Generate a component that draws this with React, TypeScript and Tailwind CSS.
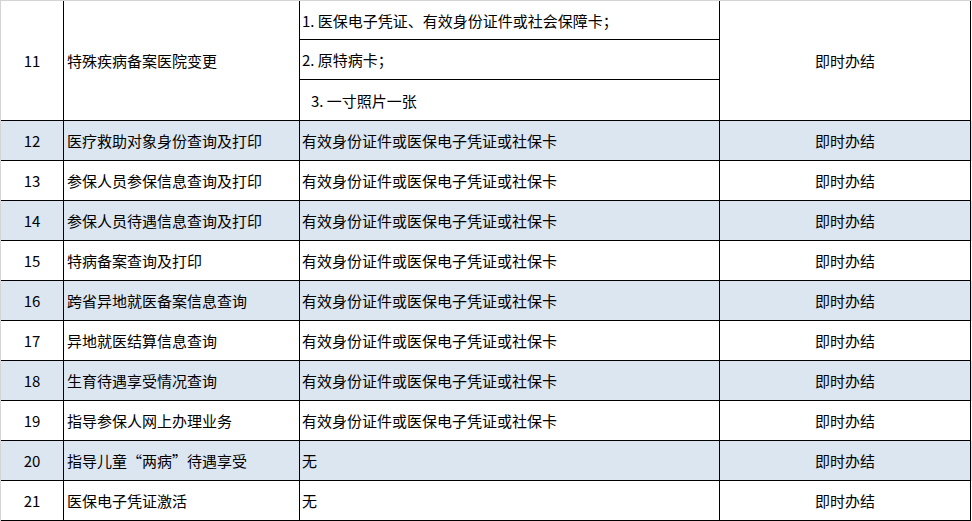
import React from "react";

type Row = { no: number; name: string; material: string; striped: boolean };

const rows: Row[] = [
  { no: 12, name: "医疗救助对象身份查询及打印", material: "有效身份证件或医保电子凭证或社保卡", striped: true },
  { no: 13, name: "参保人员参保信息查询及打印", material: "有效身份证件或医保电子凭证或社保卡", striped: false },
  { no: 14, name: "参保人员待遇信息查询及打印", material: "有效身份证件或医保电子凭证或社保卡", striped: true },
  { no: 15, name: "特病备案查询及打印", material: "有效身份证件或医保电子凭证或社保卡", striped: false },
  { no: 16, name: "跨省异地就医备案信息查询", material: "有效身份证件或医保电子凭证或社保卡", striped: true },
  { no: 17, name: "异地就医结算信息查询", material: "有效身份证件或医保电子凭证或社保卡", striped: false },
  { no: 18, name: "生育待遇享受情况查询", material: "有效身份证件或医保电子凭证或社保卡", striped: true },
  { no: 19, name: "指导参保人网上办理业务", material: "有效身份证件或医保电子凭证或社保卡", striped: false },
  { no: 20, name: "指导儿童“两病”待遇享受", material: "无", striped: true },
  { no: 21, name: "医保电子凭证激活", material: "无", striped: false },
];

const font = { fontFamily: '"Noto Sans CJK SC", "Noto Sans", sans-serif' };

export default function App() {
  return (
    <div
      lang="zh-CN"
      style={font}
      className="w-[972px] h-[521px] bg-white border-t border-l border-[#d4d4d4] text-[15px] leading-none text-black overflow-hidden"
    >
      {/* 11 */}
      <div className="flex h-[120px]">
        <div className="w-[63px] flex items-center justify-center border-r border-b border-black">11</div>
        <div className="w-[236px] flex items-center pl-[3px] border-r border-b border-black">
          特殊疾病备案医院变更
        </div>
        <div className="w-[420px] flex flex-col border-r border-b border-black">
          <div className="h-[39px] flex items-center pl-[2px] border-b border-black">
            1. 医保电子凭证、有效身份证件或社会保障卡；
          </div>
          <div className="h-[40px] flex items-center pl-[2px] border-b border-black">2. 原特病卡；</div>
          <div className="flex-1 flex items-center pl-[11px]">3. 一寸照片一张</div>
        </div>
        <div className="w-[251px] flex items-center justify-center border-r border-b border-black">即时办结</div>
      </div>

      {rows.map((r) => (
        <div key={r.no} className={`flex h-[40px] ${r.striped ? "bg-[#dce6f1]" : "bg-white"}`}>
          <div className="w-[63px] flex items-center justify-center border-r border-b border-black">{r.no}</div>
          <div className="w-[236px] flex items-center pl-[3px] border-r border-b border-black whitespace-nowrap">
            {r.name}
          </div>
          <div className="w-[420px] flex items-center pl-[2px] border-r border-b border-black whitespace-nowrap">
            {r.material}
          </div>
          <div className="w-[251px] flex items-center justify-center border-r border-b border-black">即时办结</div>
        </div>
      ))}
    </div>
  );
}
